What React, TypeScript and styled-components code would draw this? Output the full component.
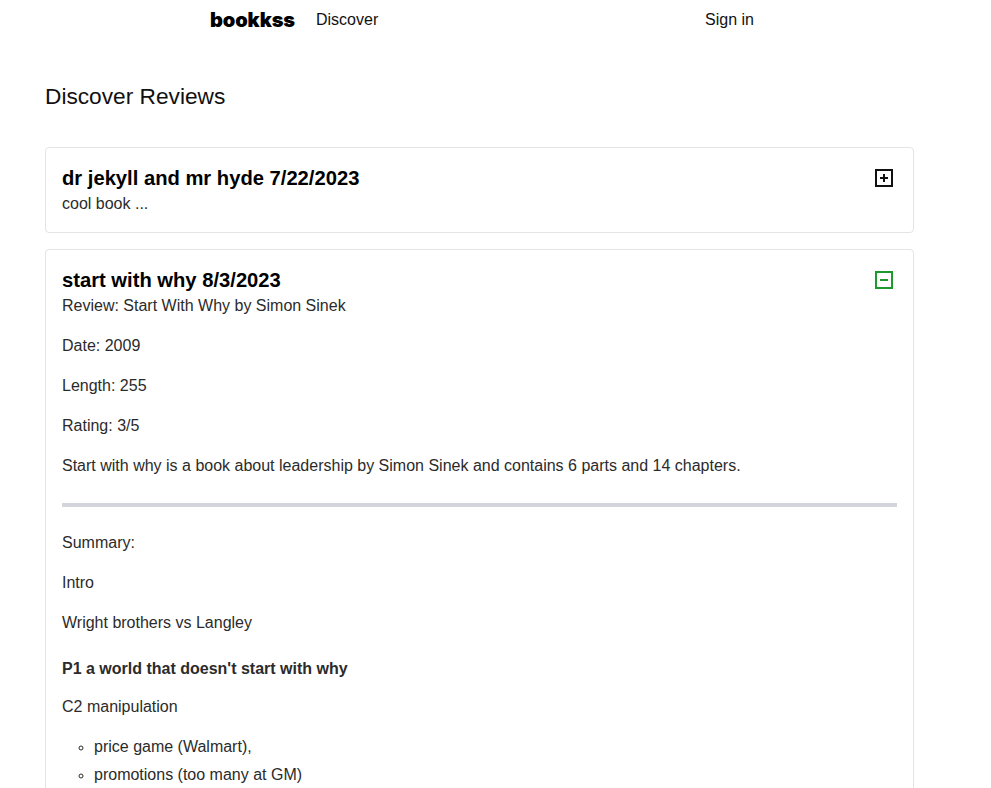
import React from "react";
import styled, { createGlobalStyle } from "styled-components";

const Global = createGlobalStyle`
  html, body { margin: 0; padding: 0; background: #fff; }
  body { font-family: "Liberation Sans", Arial, sans-serif; color: #111; }
  * { box-sizing: border-box; }
`;

const Nav = styled.nav`
  height: 40px;
  display: flex;
  align-items: center;
  padding-left: 210px;
  width: 754px;
`;

const Logo = styled.a`
  font-family: Inter, "Liberation Sans", sans-serif;
  font-weight: 900;
  font-size: 20px;
  letter-spacing: -0.1px;
  color: #000;
  text-decoration: none;
  margin-right: 21px;
`;

const NavLink = styled.a<{ $push?: boolean }>`
  font-size: 16px;
  color: #111;
  text-decoration: none;
  margin-left: ${(p) => (p.$push ? "auto" : "0")};
`;

const Main = styled.main`
  padding: 43px 0 0 45px;
  width: 914px;
`;

const PageTitle = styled.h1`
  font-size: 22.7px;
  font-weight: 400;
  margin: 0 0 37px;
  color: #111;
`;

const Card = styled.section`
  border: 1px solid #e3e4e6;
  border-radius: 4px;
  padding: 17px 16px 16px;
  margin-bottom: 16px;
`;

const CardHead = styled.div`
  display: flex;
  justify-content: space-between;
  align-items: flex-start;
  margin-bottom: 1px;
`;

const CardTitle = styled.h2`
  font-size: 20.2px;
  font-weight: 700;
  margin: 0;
  line-height: 26px;
  color: #000;
`;

const ToggleBox = styled.span<{ $color: string }>`
  width: 18px;
  height: 18px;
  margin: 4px 4px 0 0;
  display: inline-flex;
  color: ${(p) => p.$color};
`;

const Body = styled.div`
  font-size: 16px;
  line-height: 24px;
  color: #2b2b2b;
`;

const P = styled.p<{ $bold?: boolean; $gapTop?: number; $gapBottom?: number }>`
  margin: ${(p) => p.$gapTop ?? 0}px 0 ${(p) => p.$gapBottom ?? 16}px;
  font-weight: ${(p) => (p.$bold ? 700 : 400)};
`;

const Rule = styled.hr`
  border: none;
  height: 4px;
  background: #d2d5db;
  margin: 25px 0 24px;
`;

const List = styled.ul`
  list-style: circle;
  margin: 0;
  padding-left: 32px;
  li { line-height: 28px; }
  li::marker { font-size: 14px; }
`;

function Icon({ minus }: { minus?: boolean }) {
  return (
    <svg width="18" height="18" viewBox="0 0 18 18" fill="none" stroke="currentColor" strokeWidth="2">
      <rect x="1" y="1" width="16" height="16" />
      <line x1="5" y1="9" x2="13" y2="9" />
      {!minus && <line x1="9" y1="5" x2="9" y2="13" />}
    </svg>
  );
}

export default function App() {
  return (
    <>
      <Global />
      <Nav>
        <Logo href="#">bookkss</Logo>
        <NavLink href="#">Discover</NavLink>
        <NavLink href="#" $push>Sign in</NavLink>
      </Nav>
      <Main>
        <PageTitle>Discover Reviews</PageTitle>
        <Card>
          <CardHead>
            <CardTitle>dr jekyll and mr hyde 7/22/2023</CardTitle>
            <ToggleBox $color="#111"><Icon /></ToggleBox>
          </CardHead>
          <Body>cool book ...</Body>
        </Card>
        <Card>
          <CardHead>
            <CardTitle>start with why 8/3/2023</CardTitle>
            <ToggleBox $color="#1c9a2c"><Icon minus /></ToggleBox>
          </CardHead>
          <Body>
            <P>Review: Start With Why by Simon Sinek</P>
            <P>Date: 2009</P>
            <P>Length: 255</P>
            <P>Rating: 3/5</P>
            <P>Start with why is a book about leadership by Simon Sinek and contains 6 parts and 14 chapters.</P>
            <Rule />
            <P>Summary:</P>
            <P>Intro</P>
            <P>Wright brothers vs Langley</P>
            <P $bold $gapTop={22} $gapBottom={14}>P1 a world that doesn't start with why</P>
            <P $gapBottom={14}>C2 manipulation</P>
            <List>
              <li>price game (Walmart),</li>
              <li>promotions (too many at GM)</li>
              <li>fear</li>
              <li>aspirational messages</li>
            </List>
          </Body>
        </Card>
      </Main>
    </>
  );
}
